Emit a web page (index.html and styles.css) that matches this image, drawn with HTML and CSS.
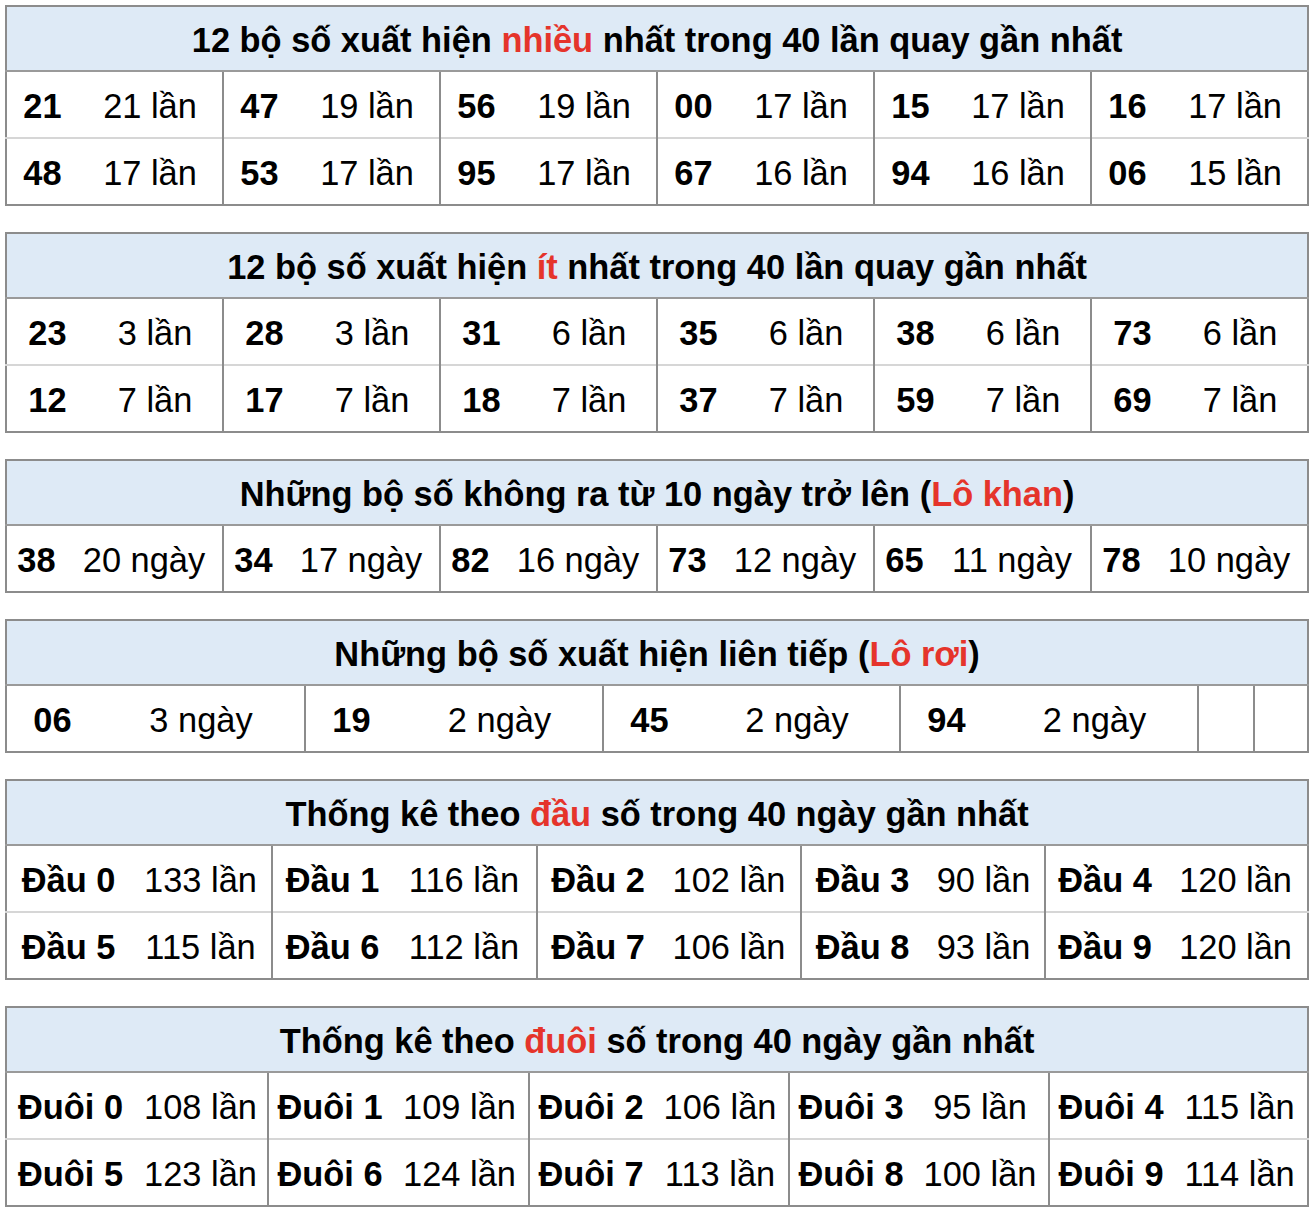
FILE: index.html
```html
<!DOCTYPE html>
<html lang="vi">
<head>
<meta charset="utf-8">
<title>Thống kê</title>
<link rel="stylesheet" href="styles.css">
</head>
<body>
<div class="page">

<table class="stat">
  <colgroup>
    <col class="w72"><col class="w145"><col class="w72"><col class="w145"><col class="w72"><col class="w145">
    <col class="w72"><col class="w145"><col class="w72"><col class="w145"><col class="w72"><col class="w145">
  </colgroup>
  <thead><tr><th colspan="12">12 bộ số xuất hiện <span class="hl">nhiều</span> nhất trong 40 lần quay gần nhất</th></tr></thead>
  <tbody>
    <tr><td class="n">21</td><td>21 lần</td><td class="n s">47</td><td>19 lần</td><td class="n s">56</td><td>19 lần</td><td class="n s">00</td><td>17 lần</td><td class="n s">15</td><td>17 lần</td><td class="n s">16</td><td>17 lần</td></tr>
    <tr class="r2"><td class="n">48</td><td>17 lần</td><td class="n s">53</td><td>17 lần</td><td class="n s">95</td><td>17 lần</td><td class="n s">67</td><td>16 lần</td><td class="n s">94</td><td>16 lần</td><td class="n s">06</td><td>15 lần</td></tr>
  </tbody>
</table>

<table class="stat">
  <colgroup>
    <col class="w82"><col class="w135"><col class="w82"><col class="w135"><col class="w82"><col class="w135">
    <col class="w82"><col class="w135"><col class="w82"><col class="w135"><col class="w82"><col class="w135">
  </colgroup>
  <thead><tr><th colspan="12">12 bộ số xuất hiện <span class="hl">ít</span> nhất trong 40 lần quay gần nhất</th></tr></thead>
  <tbody>
    <tr><td class="n">23</td><td>3 lần</td><td class="n s">28</td><td>3 lần</td><td class="n s">31</td><td>6 lần</td><td class="n s">35</td><td>6 lần</td><td class="n s">38</td><td>6 lần</td><td class="n s">73</td><td>6 lần</td></tr>
    <tr class="r2"><td class="n">12</td><td>7 lần</td><td class="n s">17</td><td>7 lần</td><td class="n s">18</td><td>7 lần</td><td class="n s">37</td><td>7 lần</td><td class="n s">59</td><td>7 lần</td><td class="n s">69</td><td>7 lần</td></tr>
  </tbody>
</table>

<table class="stat">
  <colgroup>
    <col class="w60"><col class="w157"><col class="w60"><col class="w157"><col class="w60"><col class="w157">
    <col class="w60"><col class="w157"><col class="w60"><col class="w157"><col class="w60"><col class="w157">
  </colgroup>
  <thead><tr><th colspan="12">Những bộ số không ra từ 10 ngày trở lên (<span class="hl">Lô khan</span>)</th></tr></thead>
  <tbody>
    <tr><td class="n">38</td><td>20 ngày</td><td class="n s">34</td><td>17 ngày</td><td class="n s">82</td><td>16 ngày</td><td class="n s">73</td><td>12 ngày</td><td class="n s">65</td><td>11 ngày</td><td class="n s">78</td><td>10 ngày</td></tr>
  </tbody>
</table>

<table class="stat">
  <colgroup>
    <col class="w92"><col class="w207"><col class="w92"><col class="w206"><col class="w92"><col class="w205">
    <col class="w92"><col class="w206"><col class="w56"><col class="w54">
  </colgroup>
  <thead><tr><th colspan="10">Những bộ số xuất hiện liên tiếp (<span class="hl">Lô rơi</span>)</th></tr></thead>
  <tbody>
    <tr><td class="n">06</td><td>3 ngày</td><td class="n s">19</td><td>2 ngày</td><td class="n s">45</td><td>2 ngày</td><td class="n s">94</td><td>2 ngày</td><td class="s"></td><td class="s"></td></tr>
  </tbody>
</table>

<table class="stat">
  <colgroup>
    <col class="w124"><col class="w142"><col class="w120"><col class="w145"><col class="w121"><col class="w143">
    <col class="w122"><col class="w122"><col class="w119"><col class="w144">
  </colgroup>
  <thead><tr><th colspan="10">Thống kê theo <span class="hl">đầu</span> số trong 40 ngày gần nhất</th></tr></thead>
  <tbody>
    <tr><td class="n">Đầu 0</td><td>133 lần</td><td class="n s">Đầu 1</td><td>116 lần</td><td class="n s">Đầu 2</td><td>102 lần</td><td class="n s">Đầu 3</td><td>90 lần</td><td class="n s">Đầu 4</td><td>120 lần</td></tr>
    <tr class="r2"><td class="n">Đầu 5</td><td>115 lần</td><td class="n s">Đầu 6</td><td>112 lần</td><td class="n s">Đầu 7</td><td>106 lần</td><td class="n s">Đầu 8</td><td>93 lần</td><td class="n s">Đầu 9</td><td>120 lần</td></tr>
  </tbody>
</table>

<table class="stat">
  <colgroup>
    <col class="w128"><col class="w134"><col class="w123"><col class="w138"><col class="w123"><col class="w137">
    <col class="w123"><col class="w137"><col class="w123"><col class="w136">
  </colgroup>
  <thead><tr><th colspan="10">Thống kê theo <span class="hl">đuôi</span> số trong 40 ngày gần nhất</th></tr></thead>
  <tbody>
    <tr><td class="n">Đuôi 0</td><td>108 lần</td><td class="n s">Đuôi 1</td><td>109 lần</td><td class="n s">Đuôi 2</td><td>106 lần</td><td class="n s">Đuôi 3</td><td>95 lần</td><td class="n s">Đuôi 4</td><td>115 lần</td></tr>
    <tr class="r2"><td class="n">Đuôi 5</td><td>123 lần</td><td class="n s">Đuôi 6</td><td>124 lần</td><td class="n s">Đuôi 7</td><td>113 lần</td><td class="n s">Đuôi 8</td><td>100 lần</td><td class="n s">Đuôi 9</td><td>114 lần</td></tr>
  </tbody>
</table>

</div>
</body>
</html>
```

FILE: styles.css
```css
html, body {
  margin: 0;
  padding: 0;
  background: #ffffff;
}

.page {
  padding: 5px 5px 6px 5px;
  font-family: "Liberation Sans", Arial, Helvetica, sans-serif;
  color: #000;
}

.stat {
  width: 1302px;
  table-layout: fixed;
  border-collapse: collapse;
  border: 2px solid #8c8c8c;
  margin: 0 0 26px 0;
  font-size: 34.4px;
}

.stat:last-child {
  margin-bottom: 0;
}

.stat th {
  background: #deeaf6;
  font-weight: 700;
  height: 60px;
  padding: 3px 0 0 0;
  text-align: center;
  white-space: nowrap;
  border-bottom: 2px solid #9a9a9a;
  line-height: 1;
}

.stat td {
  height: 62px;
  padding: 3px 0 0 0;
  text-align: center;
  white-space: nowrap;
  line-height: 1;
  font-weight: 400;
}

.stat td.n {
  font-weight: 700;
}

.stat td.s {
  border-left: 2px solid #8c8c8c;
}

.stat tr.r2 td {
  border-top: 2px solid #d6d6d6;
}

.stat tr.r2 td.s {
  border-left: 2px solid #8c8c8c;
}

.hl {
  color: #e5342b;
}

.w54 { width: 54px; }
.w56 { width: 56px; }
.w60 { width: 60px; }
.w72 { width: 72px; }
.w82 { width: 82px; }
.w92 { width: 92px; }
.w119 { width: 119px; }
.w120 { width: 120px; }
.w121 { width: 121px; }
.w122 { width: 122px; }
.w123 { width: 123px; }
.w124 { width: 124px; }
.w128 { width: 128px; }
.w134 { width: 134px; }
.w135 { width: 135px; }
.w136 { width: 136px; }
.w137 { width: 137px; }
.w138 { width: 138px; }
.w142 { width: 142px; }
.w143 { width: 143px; }
.w144 { width: 144px; }
.w145 { width: 145px; }
.w157 { width: 157px; }
.w205 { width: 205px; }
.w206 { width: 206px; }
.w207 { width: 207px; }
```
